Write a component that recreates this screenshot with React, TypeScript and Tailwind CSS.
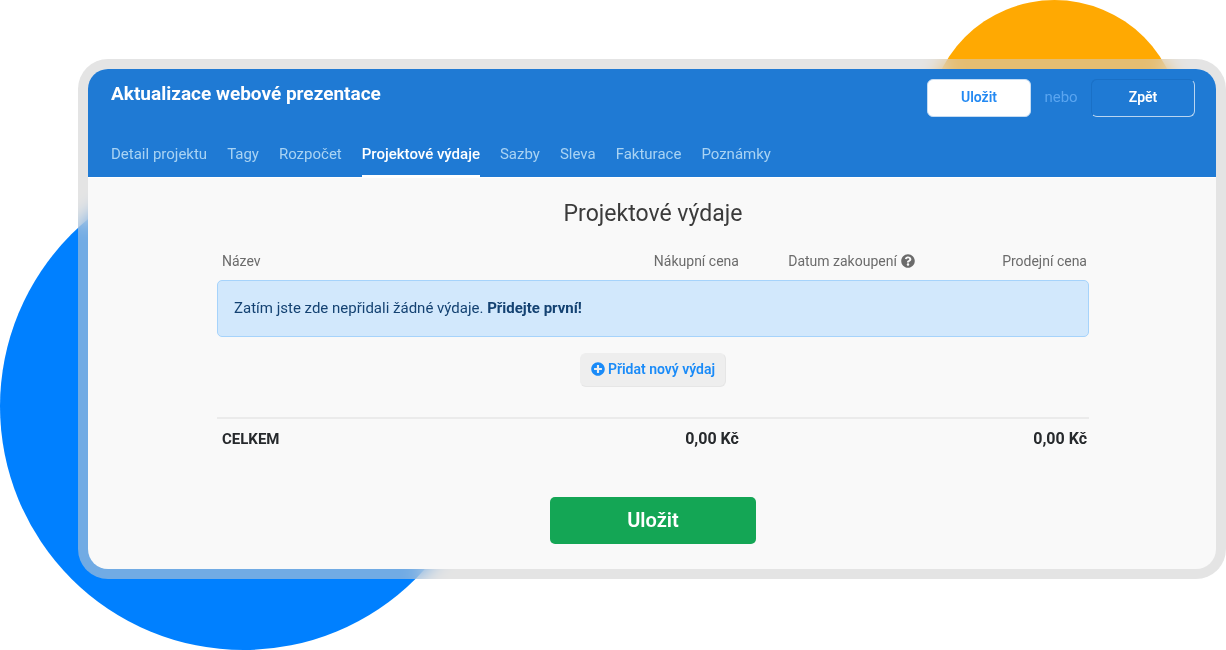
import React from 'react';
import { FaPlusCircle, FaQuestionCircle } from 'react-icons/fa';

const tabs = [
  'Detail projektu',
  'Tagy',
  'Rozpočet',
  'Projektové výdaje',
  'Sazby',
  'Sleva',
  'Fakturace',
  'Poznámky',
];

function Header() {
  return (
    <header className="bg-[#1f7ad4] pl-[23px] pr-[21px] text-white">
      <div className="flex items-start justify-between pt-[10px]">
        <h1 className="text-[19px] leading-[30px] font-bold">Aktualizace webové prezentace</h1>
        <div className="flex items-center text-[14px]">
          <button
            type="submit"
            form="expenses"
            className="h-[38px] w-[104px] rounded-md border border-[#c5dcf3] bg-white pb-[2px] font-semibold text-[#2389f2]"
          >
            Uložit
          </button>
          <span className="w-[60px] pb-[2px] text-center text-[15px] text-[#5aa5f0]">nebo</span>
          <button
            type="button"
            className="h-[38px] w-[104px] rounded-md border border-t-[#1a70c6] border-r-[#b9d5f1] border-b-[#b9d5f1] border-l-[#1a70c6] pb-[2px] font-semibold"
          >
            Zpět
          </button>
        </div>
      </div>
      <nav className="mt-[24px] flex h-9 gap-5 text-[15px] leading-[26px]">
        {tabs.map((tab) => {
          const active = tab === 'Projektové výdaje';
          return (
            <a
              key={tab}
              href="#"
              aria-current={active ? 'page' : undefined}
              className={
                active
                  ? 'border-b-2 border-white font-medium whitespace-nowrap text-white'
                  : 'whitespace-nowrap text-[#a9d3f3]'
              }
            >
              {tab}
            </a>
          );
        })}
      </nav>
    </header>
  );
}

function ExpensesTable() {
  return (
    <table className="mt-[19px] w-full table-fixed border-separate border-spacing-0">
      <thead className="text-[14px] leading-[24px] text-[#6b6b6b]">
        <tr>
          <th className="w-[43%] pb-[7px] pl-[5px] text-left font-normal">Název</th>
          <th className="w-[18%] pr-[10px] pb-[7px] text-right font-normal">Nákupní cena</th>
          <th className="w-[24%] pr-1 pb-[7px] text-center font-normal">
            <span className="inline-flex items-center gap-1">
              Datum zakoupení
              <FaQuestionCircle size={14} />
            </span>
          </th>
          <th className="w-[15%] pr-[2px] pb-[7px] text-right font-normal">Prodejní cena</th>
        </tr>
      </thead>
      <tbody>
        <tr>
          <td colSpan={4} className="p-0">
            <p className="rounded-[5px] border border-[#a6d3fb] bg-[#d2e8fc] px-4 py-[15px] text-[15px] leading-[25px] text-[#144272]">
              Zatím jste zde nepřidali žádné výdaje.{' '}
              <a href="#" className="font-bold">
                Přidejte první!
              </a>
            </p>
          </td>
        </tr>
        <tr>
          <td colSpan={4} className="pt-4 pb-[30px] text-center">
            <button
              type="button"
              className="inline-flex h-[34px] items-center gap-[3px] rounded-md border border-[#eeeeee] border-r-[#e6e6e6] border-b-[#e6e6e6] bg-[#eeeeee] px-[10px] pb-[2px] align-top text-[14px] font-semibold text-[#1a8bf8]"
            >
              <FaPlusCircle size={14} />
              Přidat nový výdaj
            </button>
          </td>
        </tr>
      </tbody>
      <tfoot className="leading-[24px] text-[#26292c]">
        <tr>
          <th scope="row" className="border-t-2 border-[#ebebeb] pt-2 pl-[5px] text-left text-[15px] font-bold">
            CELKEM
          </th>
          <td className="border-t-2 border-[#ebebeb] pt-2 pr-[10px] text-right text-[16px] font-bold">0,00 Kč</td>
          <td className="border-t-2 border-[#ebebeb]" />
          <td className="border-t-2 border-[#ebebeb] pt-2 pr-[2px] text-right text-[16px] font-bold">0,00 Kč</td>
        </tr>
      </tfoot>
    </table>
  );
}

export default function App() {
  return (
    <div className="relative isolate overflow-hidden bg-white pt-[59px] pb-[71px] pl-[78px] font-['Roboto',sans-serif]">
      <div className="absolute bottom-0 left-0 -z-10 size-[487px] rounded-full bg-[#0080ff]" />
      <div className="absolute top-0 right-[45px] -z-10 size-[253px] rounded-full bg-[#ffa902]" />
      <div className="rounded-[30px] bg-[#cecece]/55 p-[10px] backdrop-blur-[10px]">
        <div className="overflow-hidden rounded-[20px] bg-[#f9f9f9]">
          <Header />
          <main className="border-t border-white pt-[20px] pr-[127px] pb-[25px] pl-[129px]">
            <form id="expenses" onSubmit={(e: React.FormEvent) => e.preventDefault()}>
              <h2 className="text-center text-[23px] leading-[32px] text-[#3b3b3b]">Projektové výdaje</h2>
              <ExpensesTable />
              <button
                type="submit"
                className="mx-auto mt-[46px] block h-[47px] w-[206px] rounded-[5px] bg-[#14a655] pb-[2px] text-[20px] font-semibold text-white"
              >
                Uložit
              </button>
            </form>
          </main>
        </div>
      </div>
    </div>
  );
}
